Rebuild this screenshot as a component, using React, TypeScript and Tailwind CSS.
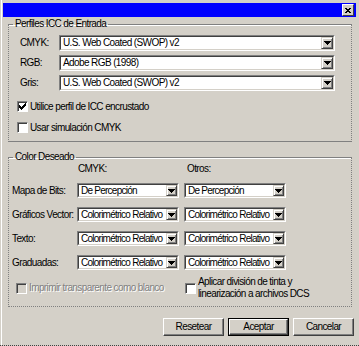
import type React from "react";

const Arrow = () => (
  <svg width="7" height="4" viewBox="0 0 7 4" shapeRendering="crispEdges">
    <path d="M0 0h7v1H0zM1 1h5v1H1zM2 2h3v1H2zM3 3h1v1H3z" fill="#000" />
  </svg>
);

const Combo: React.FC<{ value: string; className: string; btn: string }> = ({
  value,
  className,
  btn,
}) => (
  <div
    className={`flex bg-white border border-t-[#808080] border-l-[#808080] border-b-white border-r-white ${className}`}
  >
    <div className="flex-1 flex border-t border-l border-t-[#404040] border-l-[#404040] border-b border-r border-b-[#d4d0c8] border-r-[#d4d0c8] min-w-0">
      <span className="flex-1 pl-[2px] leading-[12px] whitespace-nowrap overflow-hidden">
        {value}
      </span>
      <div
        className={`${btn} h-full flex items-center justify-center bg-[#d4d0c8] border border-t-[#d4d0c8] border-l-[#d4d0c8] border-b-[#404040] border-r-[#404040] shadow-[inset_1px_1px_0_#fff,inset_-1px_-1px_0_#808080]`}
      >
        <Arrow />
      </div>
    </div>
  </div>
);

const CheckBox: React.FC<{ checked?: boolean; disabled?: boolean }> = ({
  checked,
  disabled,
}) => (
  <div
    className={`w-[11px] h-[11px] shrink-0 flex items-center justify-center border border-t-[#808080] border-l-[#808080] border-b-white border-r-white shadow-[inset_1px_1px_0_#404040] ${
      disabled ? "bg-[#d4d0c8]" : "bg-white"
    }`}
  >
    {checked && (
      <svg width="7" height="7" viewBox="0 0 7 7" shapeRendering="crispEdges">
        <path
          d="M6 0h1v3H6zM5 1h1v3H5zM4 2h1v3H4zM3 3h1v3H3zM2 4h1v3H2zM1 3h1v3H1zM0 2h1v3H0z"
          fill="#000"
        />
      </svg>
    )}
  </div>
);

const Button: React.FC<{ label: string; isDefault?: boolean }> = ({ label, isDefault }) => (
  <div className={`w-[61px] h-[18px] ${isDefault ? "border border-black" : ""}`}>
    <div className="w-full h-full flex items-center justify-center bg-[#d4d0c8] border border-t-white border-l-white border-b-[#404040] border-r-[#404040] shadow-[inset_-1px_-1px_0_#808080]">
      {label}
    </div>
  </div>
);

const groupClass =
  "w-[344px] ml-[6px] border border-[#808080] border-dotted [border-top-style:solid] shadow-[inset_0_1px_0_#fff]";

export default function App() {
  const desired = [
    { name: "Mapa de Bits:", a: "De Percepción", b: "De Percepción" },
    { name: "Gráficos Vector:", a: "Colorimétrico Relativo", b: "Colorimétrico Relativo" },
    { name: "Texto:", a: "Colorimétrico Relativo", b: "Colorimétrico Relativo" },
    { name: "Graduadas:", a: "Colorimétrico Relativo", b: "Colorimétrico Relativo" },
  ];

  return (
    <div className="w-[359px] h-[346px] bg-[#d4d0c8] border-b border-dotted border-[#404040] font-['Liberation_Sans',Arial,sans-serif] text-[10px] tracking-[-0.6px] leading-[12px] text-black overflow-hidden">
      <div className="h-full ml-[1px] border-l border-white flex flex-col">
        {/* Title bar */}
        <div className="mt-[3px] ml-[1px] w-[353px] h-[14px] shrink-0 bg-[#0000ff] flex items-center justify-end pr-[2px]">
          <div className="w-[12px] h-[12px] flex items-center justify-center bg-[#d4d0c8] border border-t-white border-l-white border-b-[#404040] border-r-[#404040]">
            <svg width="6" height="5" viewBox="0 0 6 5" shapeRendering="crispEdges">
              <path d="M0 0h2v1H0zM4 0h2v1H4zM1 1h4v1H1zM2 2h2v1H2zM1 3h4v1H1zM0 4h2v1H0zM4 4h2v1H4z" fill="#000" />
            </svg>
          </div>
        </div>

        {/* Perfiles ICC de Entrada */}
        <fieldset className={`${groupClass} mt-[1px] [border-bottom-style:solid] pb-[8px]`}>
          <legend className="ml-[4px] px-[2px]">Perfiles ICC de Entrada</legend>
          <div className="pt-[5px] pl-[8px] flex flex-col">
            <div className="flex flex-col gap-[4px] pl-[3px]">
              {[
                ["CMYK:", "U.S. Web Coated (SWOP) v2"],
                ["RGB:", "Adobe RGB (1998)"],
                ["Gris:", "U.S. Web Coated (SWOP) v2"],
              ].map(([label, value]) => (
                <div key={label} className="flex items-center">
                  <span className="w-[39px]">{label}</span>
                  <Combo value={value} className="w-[276px] h-[16px]" btn="w-[12px]" />
                </div>
              ))}
            </div>
            <div className="mt-[10px] flex flex-col gap-[10px]">
              <div className="flex items-center gap-[2px] h-[11px]">
                <CheckBox checked />
                <span>Utilice perfil de ICC encrustado</span>
              </div>
              <div className="flex items-center gap-[2px] h-[11px]">
                <CheckBox />
                <span>Usar simulación CMYK</span>
              </div>
            </div>
          </div>
        </fieldset>

        {/* Color Deseado */}
        <fieldset className={`${groupClass} mt-[9px] pb-[6px]`}>
          <legend className="ml-[4px] px-[2px]">Color Deseado</legend>
          <div className="flex pl-[3px]">
            <span className="w-[65px]" />
            <span className="w-[107px] pl-[1px]">CMYK:</span>
            <span className="pl-[3px]">Otros:</span>
          </div>
          <div className="mt-[8px] flex flex-col gap-[9px] pl-[3px] tracking-[-0.75px]">
            {desired.map((row) => (
              <div key={row.name} className="flex items-center">
                <span className="w-[65px] whitespace-nowrap tracking-[-0.6px]">{row.name}</span>
                <Combo value={row.a} className="w-[102px] h-[15px]" btn="w-[11px]" />
                <Combo value={row.b} className="w-[102px] h-[15px] ml-[5px]" btn="w-[11px]" />
              </div>
            ))}
          </div>
          <div className="mt-[6px] h-[24px] flex items-center pl-[7px]">
            <div className="w-[169px] flex items-center gap-[2px]">
              <CheckBox disabled />
              <span className="text-[#808080] [text-shadow:1px_1px_0_#fff] whitespace-nowrap">
                Imprimir transparente como blanco
              </span>
            </div>
            <div className="flex items-center gap-[2px]">
              <CheckBox />
              <span className="leading-[12px]">
                Aplicar división de tinta y
                <br />
                linearización a archivos DCS
              </span>
            </div>
          </div>
        </fieldset>

        {/* Buttons */}
        <div className="mt-[11px] flex justify-end gap-[4px] pr-[5px]">
          <Button label="Resetear" />
          <Button label="Aceptar" isDefault />
          <Button label="Cancelar" />
        </div>
      </div>
    </div>
  );
}
